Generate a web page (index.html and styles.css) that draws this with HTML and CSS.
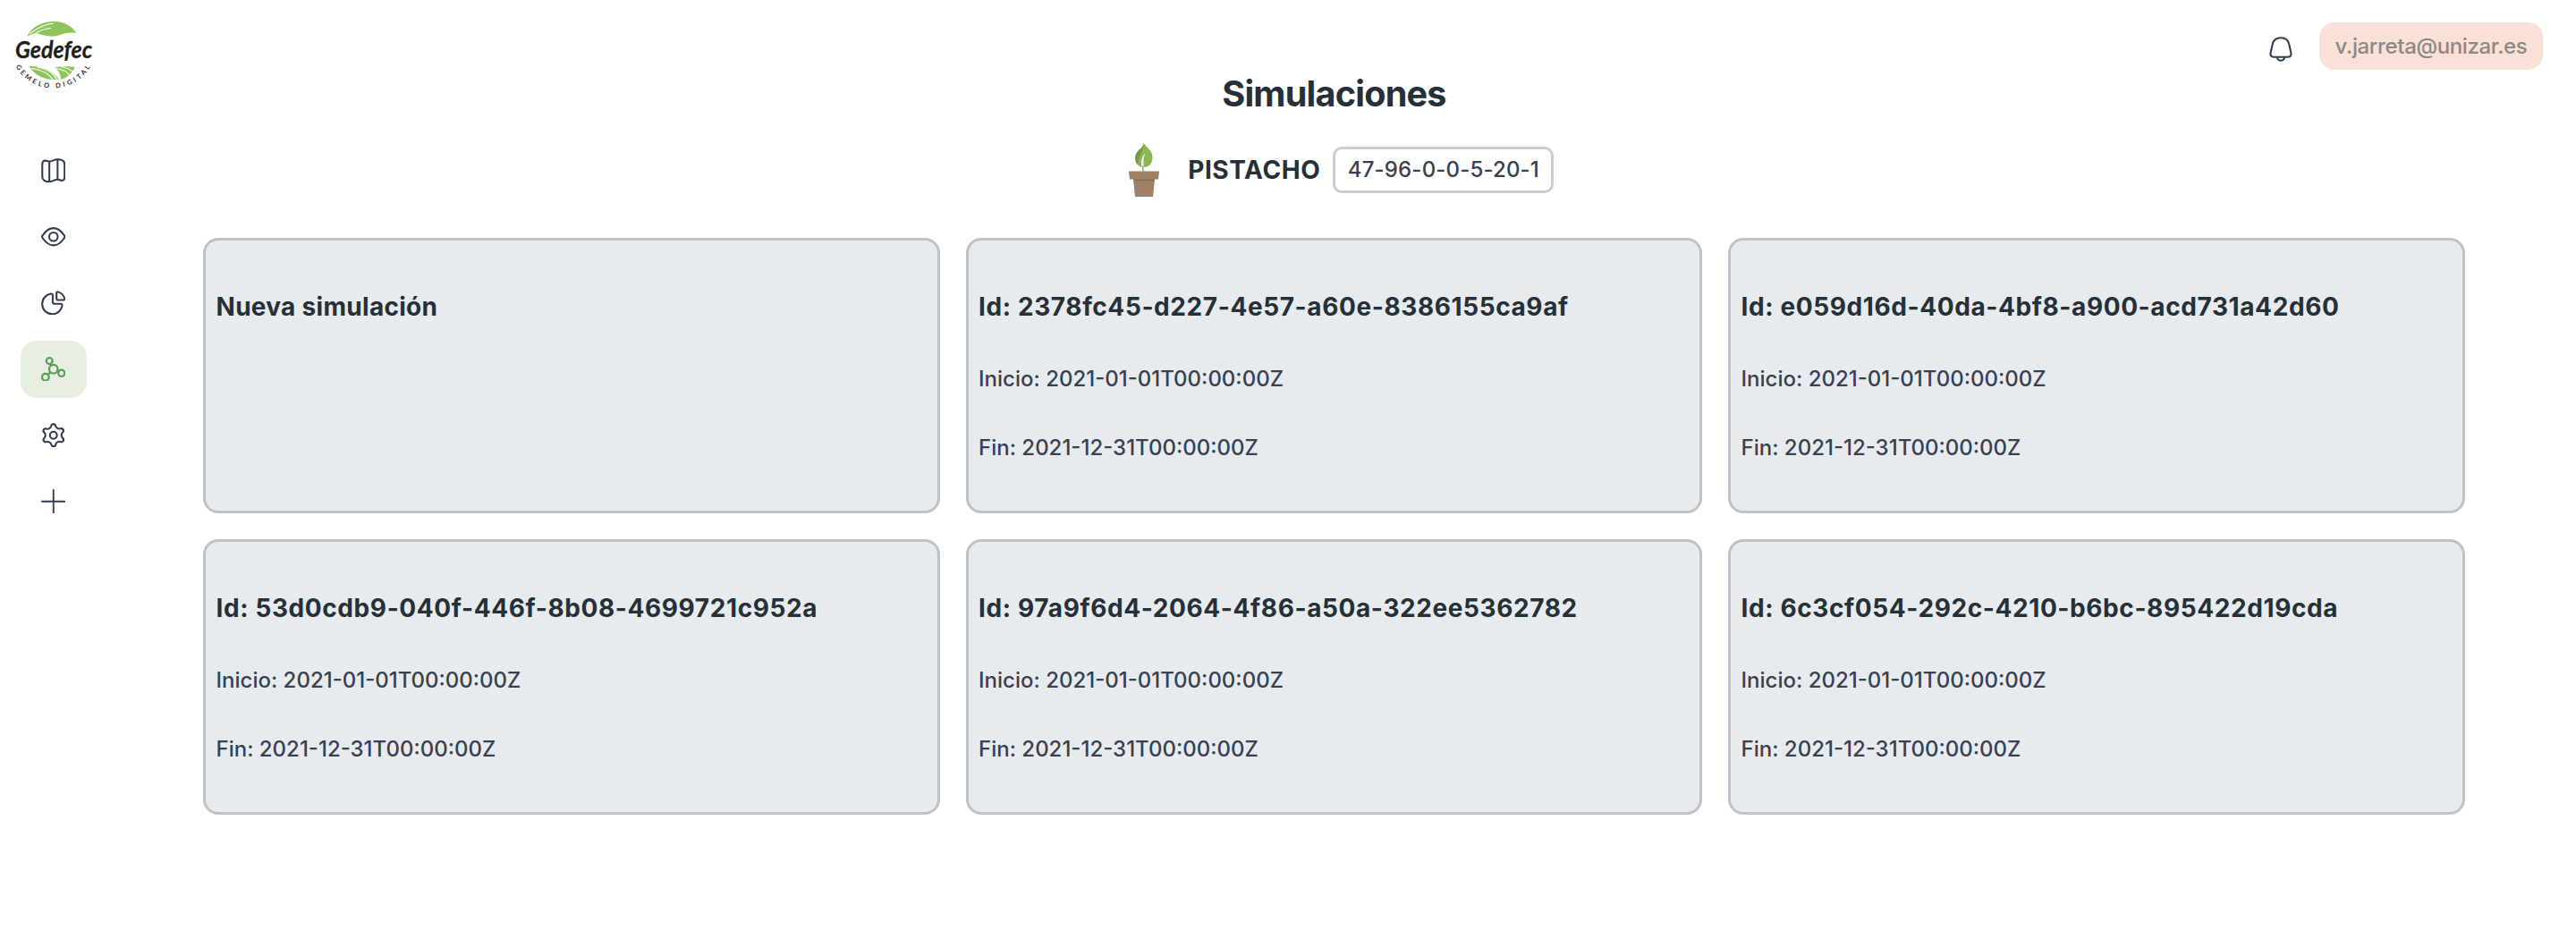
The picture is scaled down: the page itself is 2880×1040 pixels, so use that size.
FILE: index.html
```html
<!DOCTYPE html>
<html lang="es">
<head>
<meta charset="utf-8">
<title>Simulaciones</title>
<link rel="stylesheet" href="styles.css">
</head>
<body>
<aside class="sidebar">
  <svg class="logo" viewBox="0 0 120 100" role="img" aria-label="Gedefec">
    <path class="green" d="M30 31C36 19 48 14 60 14C73 14 81 20 85.500 27C77 25.500 73 27 67 29C58 32 50 30 44 28C39 26.500 33 29 30 31Z"/>
    <path class="vein" d="M33 28C43 20 50 17 60 16M38 28.500C44 24 50 22 57 21.500"/>
    <path class="green" d="M32.500 64C46 63.500 60 69 66 79C52 80.500 39 75 32.500 64ZM61 65.500C67 64 77 64 83.500 65C81 72 75 77 68 79C68 74 66 69 61 65.500Z"/>
    <path class="vein" d="M35 66.500C46 68 55 72 59.500 80M42 65C52 67 60 71 63.500 79M62 66.500C70 67 77 71 78 76M68 64.500C74 65.500 79 68 82 71"/>
    <text class="brand" x="17" y="54.800" textLength="86" lengthAdjust="spacingAndGlyphs">Gedefec</text>
    <path id="arc" fill="none" d="M17.500 64.500A48.500 48.500 0 0 0 101.500 64"/>
    <text class="tagline"><textPath href="#arc" textLength="100">GEMELO DIGITAL</textPath></text>
  </svg>
  <nav class="nav">
    <a class="item"><svg class="icon" viewBox="0 0 28 28"><path d="M1.300 7C1.300 3.600 2.700 2.600 5 2.700C6.500 2.800 7.700 3.700 9.300 3.700C12 3.700 15 1.300 18.700 1.300C23.500 1.300 26.700 2.500 26.700 7V21C26.700 24.500 25.300 25.600 23 25.300C21.500 25.100 20 24.100 18.700 24.100C15.500 24.100 13 26.700 9.300 26.700C4.500 26.700 1.300 25 1.300 20.500ZM9.300 3.700V26.500M18.700 1.500V24"/></svg></a>
    <a class="item"><svg class="icon" viewBox="0 0 28 28"><path d="M1.900 15.800C.9 14.700 .9 13.300 1.900 12.200C4.500 8.500 8.500 4.200 14 4.200S23.500 8.500 26.100 12.200C27.100 13.300 27.100 14.700 26.100 15.800C23.500 19.500 19.500 23.800 14 23.800S4.500 19.500 1.900 15.800Z"/><circle cx="14" cy="14" r="4.900"/></svg></a>
    <a class="item"><svg class="icon" viewBox="0 0 28 28"><path d="M11.500 3.600C12.600 3.500 13.200 4.200 13.200 5.200V12.600C13.200 14.300 14 15.100 15.700 15.100H22.500C23.600 15.100 24.200 15.800 24 16.900C23 22.600 18.600 26.800 12.700 26.800C6.300 26.800 1.200 21.700 1.200 15.300C1.200 9.200 5.700 4.200 11.500 3.600ZM17.500 2.600C17.500 1.600 18.300 1.100 19.200 1.400C22.800 2.500 25.600 5.300 26.700 8.900C27 9.900 26.400 10.700 25.400 10.700H19C18 10.700 17.500 10.100 17.500 9.200Z"/></svg></a>
    <a class="item active"><svg class="icon" viewBox="0 0 28 28"><circle cx="14" cy="14" r="4.900"/><circle cx="9.400" cy="4.700" r="3.500"/><circle cx="23.200" cy="18.600" r="3.700"/><circle cx="4.900" cy="23.200" r="3.900"/><path d="M10.900 7.900L11.900 9.600M18.500 16L19.800 16.900M10.500 17.500L7.800 20.400"/></svg></a>
    <a class="item"><svg class="icon" viewBox="-14 -14 28 28">
      <path id="tooth" d="M0-12.800C1.600-12.800 2.300-11.700 2.500-10.400C2.800-8.900 3.700-8.400 4.500-7.950C5.300-7.500 6.300-7 7.700-7.500C9-8 10.300-7.800 11.090-6.400"/>
      <use href="#tooth" transform="rotate(60)"/><use href="#tooth" transform="rotate(120)"/><use href="#tooth" transform="rotate(180)"/><use href="#tooth" transform="rotate(240)"/><use href="#tooth" transform="rotate(300)"/>
      <circle r="4"/></svg></a>
    <a class="item"><svg class="icon plus" viewBox="0 0 28 28"><path d="M14 1V27M1 14H27"/></svg></a>
  </nav>
</aside>
<main class="main">
  <header class="topbar">
    <svg class="bell" viewBox="0 0 26 28"><path d="M13 1.300C8 1.300 4.500 4.300 3.600 9L1.700 17.600C1 20.800 2.200 22.800 5.200 22.800H20.800C23.800 22.800 25 20.800 24.300 17.600L22.400 9C21.500 4.300 18 1.300 13 1.300ZM8.700 22.900C9.200 25.400 10.600 26.800 13 26.800S16.800 25.400 17.300 22.900"/></svg>
    <span class="user">v.jarreta@unizar.es</span>
  </header>
  <h1 class="title">Simulaciones</h1>
  <div class="crop">
    <svg class="pot" viewBox="0 0 66 60">
      <path fill="#8bb652" d="M32.600 0C35 4.500 43 8 42.500 17C42.200 23 38 27 32.800 27C32 21 32 16 34.500 11C29.500 16 29.500 22 30.300 27C25 25 22.500 20 23.500 14C25 8 32 6 32.600 0Z"/>
      <path fill="#73984c" d="M32.600 0C32 6 25 8 23.500 14C22.500 19 24 22 26 24C25.500 15 33.500 9 32.600 0Z"/>
      <path class="stem" d="M31.300 25C31.500 28 31.800 30 32.300 32"/>
      <path fill="#9d8066" d="M16 31.500H50L49 40.500H45L43 60H23L21 40.500H17Z"/>
      <path fill="#8c6f58" d="M21 40.500H45L44.800 42.500H21.200Z"/>
    </svg>
    <h2 class="name">PISTACHO</h2>
    <span class="code">47-96-0-0-5-20-1</span>
  </div>
  <section class="grid">
    <article class="card new"><h3>Nueva simulación</h3></article>
    <article class="card"><h3>Id: 2378fc45-d227-4e57-a60e-8386155ca9af</h3><p>Inicio: 2021-01-01T00:00:00Z</p><p>Fin: 2021-12-31T00:00:00Z</p></article>
    <article class="card"><h3>Id: e059d16d-40da-4bf8-a900-acd731a42d60</h3><p>Inicio: 2021-01-01T00:00:00Z</p><p>Fin: 2021-12-31T00:00:00Z</p></article>
    <article class="card"><h3>Id: 53d0cdb9-040f-446f-8b08-4699721c952a</h3><p>Inicio: 2021-01-01T00:00:00Z</p><p>Fin: 2021-12-31T00:00:00Z</p></article>
    <article class="card"><h3>Id: 97a9f6d4-2064-4f86-a50a-322ee5362782</h3><p>Inicio: 2021-01-01T00:00:00Z</p><p>Fin: 2021-12-31T00:00:00Z</p></article>
    <article class="card"><h3>Id: 6c3cf054-292c-4210-b6bc-895422d19cda</h3><p>Inicio: 2021-01-01T00:00:00Z</p><p>Fin: 2021-12-31T00:00:00Z</p></article>
  </section>
</main>
</body>
</html>
```
FILE: styles.css
```css
* { box-sizing: border-box; }
body {
  margin: 0;
  min-height: 1040px;
  display: flex;
  background: #fff;
  color: #374151;
  font: 500 24px/36px Inter, sans-serif;
}
h1, h2, h3, p { margin: 0; }

.sidebar { width: 120px; padding-top: 10px; flex: none; }
.logo { display: block; width: 120px; height: 100px; }
.green { fill: #8fc45a; }
.vein { fill: none; stroke: #fff; stroke-width: 1.2; }
.brand { font: italic 700 27.5px Lato, sans-serif; fill: #1d1f1b; stroke: #1d1f1b; stroke-width: .3; }
.tagline { font: 700 7.5px Lato, sans-serif; fill: #2d2f2b; }

.nav {
  display: flex;
  flex-direction: column;
  gap: 10px;
  padding: 48.5px 23px 0;
}
.item {
  height: 64px;
  display: flex;
  align-items: center;
  justify-content: center;
  border-radius: 18px;
  color: #333d4e;
}
.item.active { background: #e7efe3; color: #5d9c59; }
.icon, .bell {
  fill: none;
  stroke: currentColor;
  stroke-width: 2.1;
  stroke-linecap: round;
  stroke-linejoin: round;
}
.icon { width: 27.5px; height: 27.5px; margin-left: -1px; }
.active .icon { stroke-width: 2.3; }
.icon.plus { stroke-width: 1.9; }

.main { flex: 1; padding: 0 124px 0 107px; }
.topbar {
  height: 81px;
  margin-right: -87px;
  padding-top: 25px;
  display: flex;
  align-items: flex-start;
  justify-content: flex-end;
  gap: 30px;
}
.bell { width: 26px; height: 28px; margin-top: 16.3px; color: #333d4e; }
.user {
  width: 250px;
  height: 53px;
  line-height: 53px;
  text-align: center;
  border-radius: 17px;
  background: #fae0d7;
  color: #8c8884;
  letter-spacing: -.37px;
}
.title {
  text-align: center;
  font-size: 39.6px;
  line-height: 48px;
  letter-spacing: -.78px;
  color: #263038;
}
.crop {
  display: flex;
  justify-content: center;
  align-items: center;
  height: 60px;
  margin-top: 31px;
}
.pot { width: 66px; height: 60px; }
.stem { fill: none; stroke: #8bb652; stroke-width: 1.5; }
.name {
  margin: 0 14px 0 16.6px;
  font-size: 28px;
  letter-spacing: .59px;
  color: #263038;
}
.code {
  width: 247px;
  height: 52px;
  border: 3px solid #c9cdd2;
  border-radius: 10px;
  line-height: 45px;
  text-align: center;
  letter-spacing: .16px;
}

.grid {
  display: grid;
  grid-template-columns: repeat(3, 1fr);
  grid-auto-rows: 308px;
  gap: 29px 28.6px;
  margin-top: 46px;
}
.card {
  padding: 56px 11.5px 0;
  border: 3px solid #bcc2c7;
  border-radius: 17px;
  background: #e8ebee;
}
.card h3 {
  font-size: 28px;
  letter-spacing: .6px;
  color: #263038;
  margin-bottom: 45px;
}
.card.new h3 { letter-spacing: .29px; }
.card p + p { margin-top: 41px; }
```
